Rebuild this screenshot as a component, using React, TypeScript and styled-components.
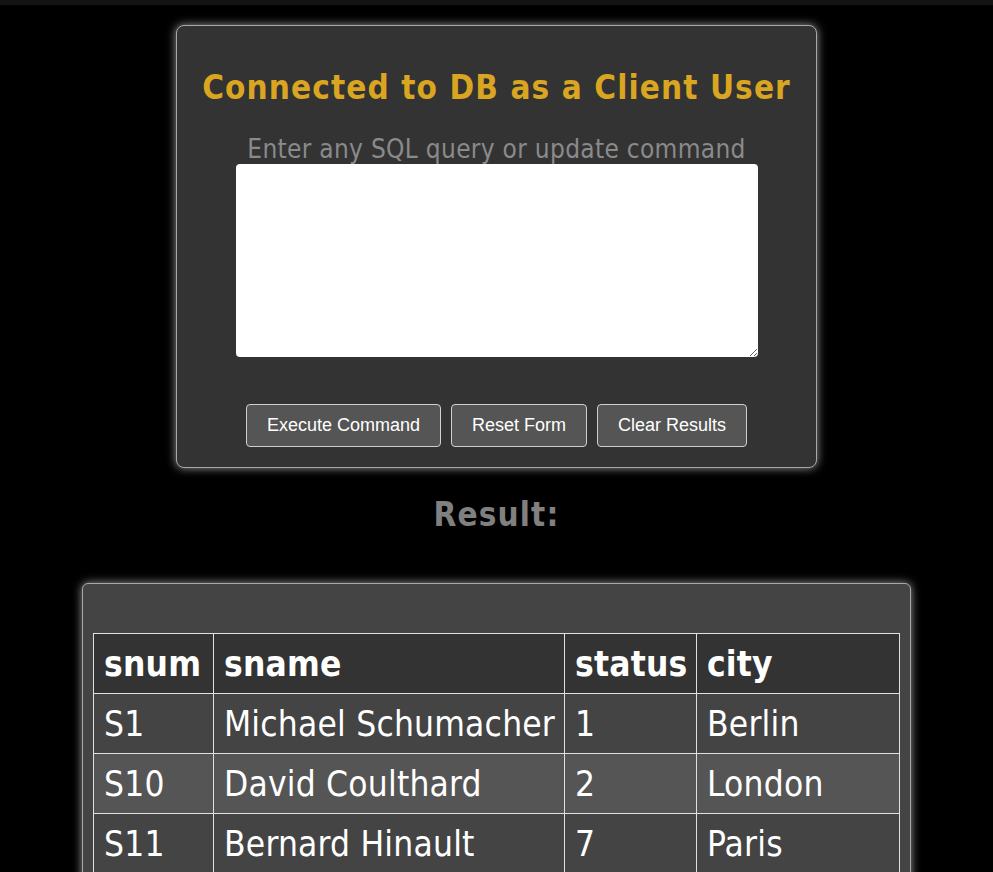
import React, { ReactElement } from "react";
import styled, { createGlobalStyle } from "styled-components";

interface ISupplier {
  snum: string;
  sname: string;
  status: number;
  city: string;
}

interface IRowProps {
  striped: boolean;
}

interface IHeadCellProps {
  colWidth: number;
}

const suppliers: ISupplier[] = [
  { snum: "S1", sname: "Michael Schumacher", status: 1, city: "Berlin" },
  { snum: "S10", sname: "David Coulthard", status: 2, city: "London" },
  { snum: "S11", sname: "Bernard Hinault", status: 7, city: "Paris" },
  { snum: "S12", sname: "Ayrton Senna", status: 3, city: "Sao Paulo" },
];

const columns = [
  { key: "snum", width: 120 },
  { key: "sname", width: 351 },
  { key: "status", width: 132 },
  { key: "city", width: 203 },
];

const GlobalStyle = createGlobalStyle`
  html, body {
    margin: 0;
    padding: 0;
    background: #000;
    font-family: "DejaVu Sans Condensed", "DejaVu Sans", sans-serif;
    overflow: hidden;
  }
`;

const TopBar = styled.div`
  height: 5px;
  background: #141414;
`;

const Page = styled.main`
  display: flex;
  flex-direction: column;
  align-items: center;
  padding-top: 20px;
`;

const Card = styled.section`
  width: 641px;
  box-sizing: border-box;
  background: #333;
  border: 1px solid #a8a8a8;
  border-radius: 8px;
  box-shadow: 0 0 10px rgba(255, 255, 255, 0.6);
  display: flex;
  flex-direction: column;
  align-items: center;
  padding: 42px 0 20px;
`;

const Title = styled.h1`
  margin: 0;
  color: #daa520;
  font-size: 33px;
  letter-spacing: 1.1px;
  font-weight: bold;
  line-height: 40px;
`;

const Label = styled.label`
  margin-top: 26px;
  color: #8a8a8a;
  font-size: 26px;
  letter-spacing: 0.3px;
  line-height: 30px;
`;

const QueryBox = styled.textarea`
  display: block;
  width: 522px;
  height: 193px;
  box-sizing: border-box;
  border: none;
  border-radius: 4px;
  background: #fff;
  resize: vertical;
`;

const ButtonRow = styled.div`
  display: flex;
  gap: 10px;
  margin-top: 47px;
`;

const Button = styled.button`
  height: 43px;
  padding: 0 20px;
  background: #555;
  color: #fff;
  border: 1px solid #d0d0d0;
  border-radius: 4px;
  font-family: "Liberation Sans", Arial, sans-serif;
  font-size: 18px;
`;

const ResultTitle = styled.h2`
  margin: 27px 0 0;
  color: #808080;
  font-size: 33px;
  letter-spacing: 1.1px;
  font-weight: bold;
  line-height: 40px;
`;

const ResultCard = styled.section`
  margin-top: 48px;
  width: 829px;
  box-sizing: border-box;
  background: #444;
  border: 1px solid #a8a8a8;
  border-radius: 6px;
  box-shadow: 0 0 10px rgba(255, 255, 255, 0.6);
  padding: 49px 10px 20px;
`;

const Table = styled.table`
  width: 100%;
  table-layout: fixed;
  border-collapse: collapse;
  color: #fff;
  font-size: 35px;
  letter-spacing: 0.2px;
`;

const HeadCell = styled.th<IHeadCellProps>`
  width: ${(props) => props.colWidth}px;
  background: #333;
  border: 1px solid #e0e0e0;
  height: 60px;
  box-sizing: border-box;
  padding: 0 10px;
  text-align: left;
  font-weight: bold;
`;

const Row = styled.tr<IRowProps>`
  background: ${(props) => (props.striped ? "#555" : "#444")};
`;

const Cell = styled.td`
  border: 1px solid #e0e0e0;
  height: 60px;
  box-sizing: border-box;
  padding: 0 10px;
  white-space: nowrap;
`;

const App = (): ReactElement => {
  return (
    <>
      <GlobalStyle />
      <TopBar />
      <Page>
        <Card>
          <Title>Connected to DB as a Client User</Title>
          <Label htmlFor="query">Enter any SQL query or update command</Label>
          <QueryBox id="query" />
          <ButtonRow>
            <Button>Execute Command</Button>
            <Button>Reset Form</Button>
            <Button>Clear Results</Button>
          </ButtonRow>
        </Card>
        <ResultTitle>Result:</ResultTitle>
        <ResultCard>
          <Table>
            <thead>
              <tr>
                {columns.map((c) => (
                  <HeadCell key={c.key} colWidth={c.width}>
                    {c.key}
                  </HeadCell>
                ))}
              </tr>
            </thead>
            <tbody>
              {suppliers.map((s, index) => (
                <Row key={s.snum} striped={index % 2 === 1}>
                  <Cell>{s.snum}</Cell>
                  <Cell>{s.sname}</Cell>
                  <Cell>{s.status}</Cell>
                  <Cell>{s.city}</Cell>
                </Row>
              ))}
            </tbody>
          </Table>
        </ResultCard>
      </Page>
    </>
  );
};

export default App;
